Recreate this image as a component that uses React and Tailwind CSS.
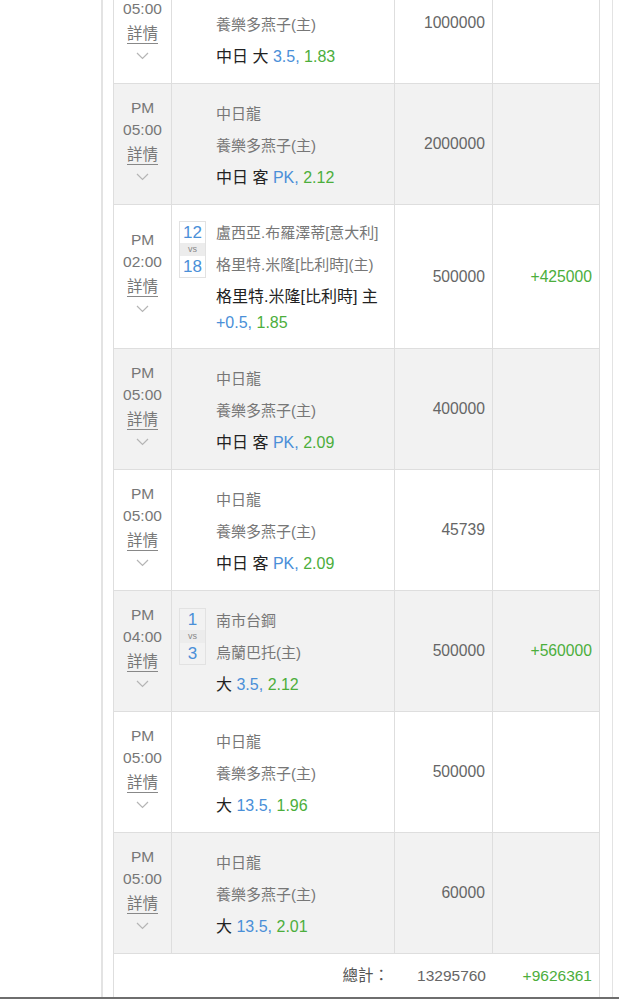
import React from 'react';

const rows = [
  { time: '05:00', home: '中日龍', away: '養樂多燕子(主)', pick: '中日 大', line: '3.5', odds: '1.83', amount: '1000000', win: '' },
  { time: '05:00', home: '中日龍', away: '養樂多燕子(主)', pick: '中日 客', line: 'PK', odds: '2.12', amount: '2000000', win: '' },
  { time: '02:00', home: '盧西亞.布羅澤蒂[意大利]', away: '格里特.米隆[比利時](主)', pick: '格里特.米隆[比利時] 主', line: '+0.5', odds: '1.85', amount: '500000', win: '+425000', score: ['12', '18'] },
  { time: '05:00', home: '中日龍', away: '養樂多燕子(主)', pick: '中日 客', line: 'PK', odds: '2.09', amount: '400000', win: '' },
  { time: '05:00', home: '中日龍', away: '養樂多燕子(主)', pick: '中日 客', line: 'PK', odds: '2.09', amount: '45739', win: '' },
  { time: '04:00', home: '南市台鋼', away: '烏蘭巴托(主)', pick: '大', line: '3.5', odds: '2.12', amount: '500000', win: '+560000', score: ['1', '3'] },
  { time: '05:00', home: '中日龍', away: '養樂多燕子(主)', pick: '大', line: '13.5', odds: '1.96', amount: '500000', win: '' },
  { time: '05:00', home: '中日龍', away: '養樂多燕子(主)', pick: '大', line: '13.5', odds: '2.01', amount: '60000', win: '' },
];

const Chevron = () => (
  <svg width="13" height="8" viewBox="0 0 13 8" fill="none">
    <polyline points="1,1 6.5,6.5 12,1" stroke="#b5b5b5" strokeWidth="1.2" />
  </svg>
);

const ScoreBox = ({ score }) => (
  <div className="row-span-2 self-center w-[27px] border border-[#e2e2e2] flex flex-col items-center">
    <div className="h-[21px] leading-[21px] text-[17px] text-[#4a8fd8]">{score[0]}</div>
    <div className="w-full h-[13px] leading-[12px] text-[9px] text-[#888] bg-[#ececec] text-center">vs</div>
    <div className="h-[21px] leading-[21px] text-[17px] text-[#4a8fd8]">{score[1]}</div>
  </div>
);

const BetRow = ({ row, gray }) => (
  <div className={`grid grid-cols-[58px_223px_98px_106px] border-b border-[#dedede] ${gray ? 'bg-[#f2f2f2]' : 'bg-white'}`}>
    {/* time */}
    <div className="border-r border-[#dedede] flex flex-col items-center justify-center pb-[7px] text-[15.5px] text-[#777]">
      <div className="leading-[22px]">PM</div>
      <div className="leading-[22px]">{row.time}</div>
      <div className="leading-[28px] underline underline-offset-[4px] decoration-[#888]">詳情</div>
      <div className="h-[16px] flex items-center">
        <Chevron />
      </div>
    </div>

    {/* match */}
    <div className="border-r border-[#dedede] min-h-[120px] flex flex-col justify-center py-3 pl-[7px] pr-[6px]">
      <div className="grid grid-cols-[27px_1fr] gap-x-[10px]">
        {row.score ? <ScoreBox score={row.score} /> : <div className="row-span-2" />}
        <div className="col-start-2 h-[32px] leading-[32px] text-[15px] text-[#777] whitespace-nowrap">{row.home}</div>
        <div className="col-start-2 h-[32px] leading-[32px] text-[15px] text-[#777] whitespace-nowrap">{row.away}</div>
        <div className="col-start-2 mt-[3px] leading-[26px] text-[16px] text-[#222]">
          {row.pick} <span className="text-[#4a8fd8]">{row.line},</span>{' '}
          <span className="text-[#4cae3c]">{row.odds}</span>
        </div>
      </div>
    </div>

    {/* amount */}
    <div className="border-r border-[#dedede] flex items-center justify-end pr-[7px] text-[15.7px] text-[#666]">
      {row.amount}
    </div>

    {/* result */}
    <div className="flex items-center justify-end pr-[7px] text-[15.7px] text-[#4cae3c]">
      {row.win}
    </div>
  </div>
);

const App = () => {
  return (
    <div className="h-[1000px] overflow-hidden bg-white font-['Liberation_Sans','Noto_Sans_CJK_TC',sans-serif]">
      <div className="flex -mt-[37px]">
        <div className="w-[101px] shrink-0" />
        <div className="w-[512px] shrink-0 border-l-2 border-r border-[#e3e3e3] pl-[10px] pr-[12px]">
          <div className="w-[487px] border-x border-[#dedede]">
            {rows.map((row, i) => (
              <BetRow key={i} row={row} gray={i % 2 === 1} />
            ))}

            {/* total */}
            <div className="grid grid-cols-[58px_223px_98px_106px] h-[43px] items-center bg-white text-[15.5px]">
              <div className="col-span-2 text-right pr-[6px] text-[#555]">總計：</div>
              <div className="text-right pr-[7px] text-[#666]">13295760</div>
              <div className="text-right pr-[7px] text-[#4cae3c]">+9626361</div>
            </div>
          </div>
        </div>
      </div>
      <div className="h-[2px] bg-[#6e6e6e]" />
    </div>
  );
};

export default App;
